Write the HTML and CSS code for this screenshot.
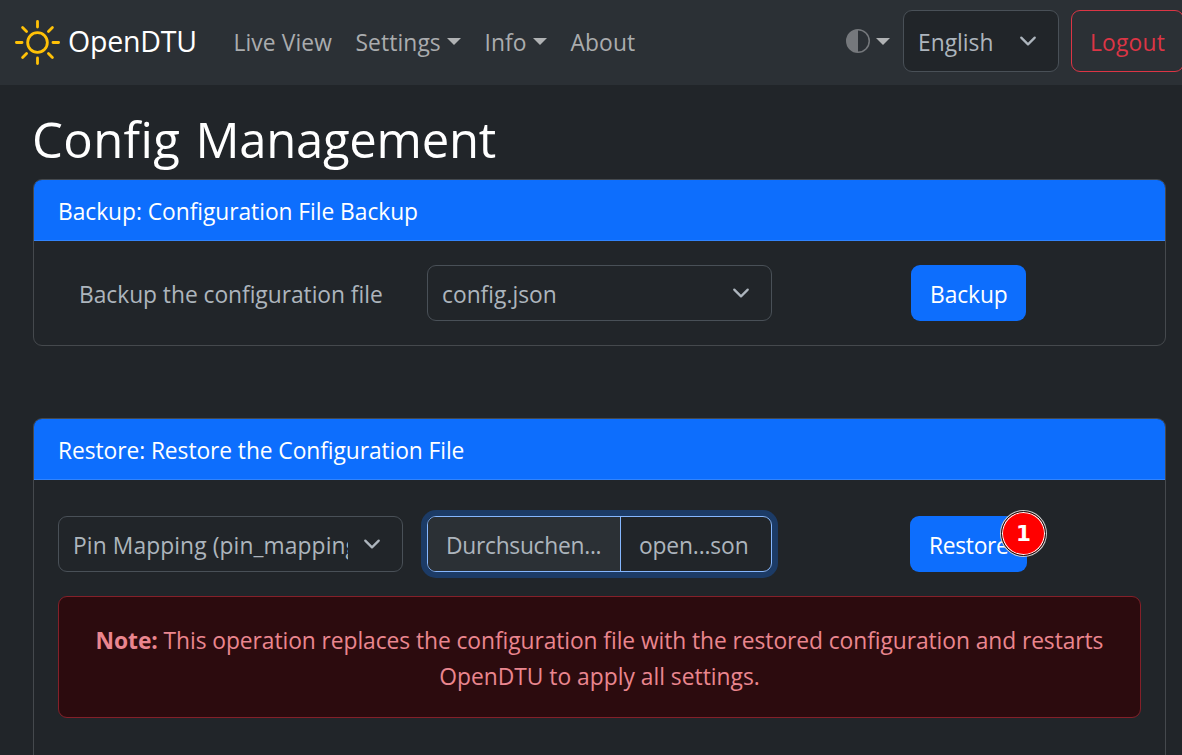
FILE: index.html
```
<!DOCTYPE html>
<html lang="en">
<head>
<meta charset="utf-8">
<title>OpenDTU</title>
<link rel="stylesheet" href="styles.css">
</head>
<body>
<nav class="navbar">
  <a class="brand">
    <svg class="sun" viewBox="0 0 16 16" fill="none" stroke="currentColor" stroke-linecap="round"><circle cx="8" cy="8" r="3.5"/><path d="M8 .5v2M8 13.5v2M.5 8h2M13.5 8h2M2.697 2.697l1.414 1.414M11.889 11.889l1.414 1.414M13.303 2.697l-1.414 1.414M4.111 11.889l-1.414 1.414"/></svg>
    <span class="brand-name">OpenDTU</span>
  </a>
  <a class="nav-link live">Live View</a>
  <a class="nav-link settings">Settings<i class="caret"></i></a>
  <a class="nav-link info">Info<i class="caret"></i></a>
  <a class="nav-link about">About</a>
  <div class="tools">
    <a class="theme"><svg viewBox="0 0 16 16" fill="currentColor"><path d="M8 15A7 7 0 1 0 8 1v14zm0 1A8 8 0 1 1 8 0a8 8 0 0 1 0 16z"/></svg><i class="caret"></i></a>
    <div class="select language"><span class="value">English</span><svg class="chevron" viewBox="0 0 16 16"><path d="m2 5 6 6 6-6"/></svg></div>
    <a class="logout">Logout</a>
  </div>
</nav>
<main class="page">
  <h1>Config <span class="title-end">Management</span></h1>
  <section class="card">
    <header class="card-header"><span class="backup-title">Backup: Configuration File Backup</span></header>
    <div class="row backup-row">
      <div class="label"><span>Backup the configuration file</span></div>
      <div class="select"><span class="value">config.json</span><svg class="chevron" viewBox="0 0 16 16"><path d="m2 5 6 6 6-6"/></svg></div>
      <a class="button backup">Backup</a>
    </div>
  </section>
  <section class="card restore-card">
    <header class="card-header"><span class="restore-title">Restore: Restore the Configuration File</span></header>
    <div class="row restore-row">
      <div class="select"><span class="value pin">Pin Mapping (pin_mapping</span><svg class="chevron" viewBox="0 0 16 16"><path d="m2 5 6 6 6-6"/></svg></div>
      <div class="file"><span class="browse">Durchsuchen...</span><span class="filename">open...son</span></div>
      <a class="button restore">Restore<span class="marker">1</span></a>
    </div>
    <div class="alert">
      <div class="note-one"><b>Note:</b> This operation replaces the configuration file with the restored configuration and restarts</div>
      <div class="note-two">OpenDTU to apply all settings.</div>
    </div>
  </section>
</main>
</body>
</html>
```
FILE: styles.css
```
* { box-sizing: border-box; }
body {
  margin: 0;
  height: 755px;
  overflow: hidden;
  background: #212529;
  color: #adb5bd;
  font: 22.8px/36px "Open Sans", "Noto Sans", sans-serif;
  white-space: nowrap;
}
.navbar {
  display: flex;
  align-items: center;
  height: 85px;
  padding-left: 15px;
  background: #2b3035;
  color: #aaacae;
}
.brand { display: flex; align-items: center; width: 218.5px; height: 85px; color: #fff; font-size: 28.5px; }
.brand-name { padding-bottom: 3px; letter-spacing: -.2px; }
.sun { width: 45px; height: 45px; margin-right: 8px; color: #ffc107; }
.nav-link { display: flex; align-items: center; letter-spacing: .1px; }
.live { width: 122px; }
.settings { width: 129px; }
.info { width: 86px; }
.caret { border: 7px solid transparent; border-top-color: #b0b2b4; border-bottom: 0; margin: 0 0 2px 6px; }
.tools { display: flex; align-items: center; margin-left: auto; margin-right: -2px; padding-bottom: 3px; flex: none; }
.theme { display: flex; align-items: center; width: 57px; color: #75787c; }
.theme svg { width: 24px; height: 24px; }
.theme .caret { margin-bottom: 0; }
.select {
  display: flex;
  align-items: center;
  justify-content: space-between;
  width: 345px;
  height: 56px;
  padding: 0 21px 0 14px;
  border: 1px solid #495057;
  border-radius: 9px;
  background: #212529;
  color: #adb5bd;
}
.value { padding-top: 3px; overflow: hidden; }
.pin { width: 275px; letter-spacing: .1px; }
.chevron { width: 18px; height: 18px; flex: none; fill: none; stroke: #adb5bd; stroke-width: 2; stroke-linecap: round; stroke-linejoin: round; }
.language { width: 156px; height: 62px; margin-right: 12px; }
.logout { width: 113px; height: 62px; padding: 14px 0 0 18px; border: 1px solid #dc3545; border-radius: 9px; color: #dc3545; letter-spacing: .2px; }
.page { padding: 22px 16px 0 33px; }
h1 { margin: 0 0 0 -1px; height: 72px; font-size: 49px; line-height: 65px; font-weight: 400; color: #fff; letter-spacing: .4px; }
.title-end { margin-left: 2px; letter-spacing: -.25px; }
.card { height: 167px; border: 1px solid #45494d; border-radius: 9px; overflow: hidden; }
.restore-card { margin-top: 72px; height: 337px; border-bottom: 0; border-radius: 9px 9px 0 0; }
.card-header { height: 61px; padding: 14px 24px 0; background: #0d6efd; border-bottom: 1px solid #3184fd; color: #fff; }
.backup-title { letter-spacing: -.05px; }
.restore-title { letter-spacing: -.08px; }
.row { display: flex; align-items: center; }
.backup-row { padding: 24px 24px 0; }
.label { width: 369px; padding-left: 21px; padding-top: 4px; letter-spacing: -.04px; }
.button { position: relative; height: 56px; border-radius: 9px; background: #0d6efd; color: #fff; padding: 12px 0 0 19px; letter-spacing: -.1px; }
.backup { width: 115px; margin-left: 139px; }
.restore-row { padding: 36px 24px 0; }
.restore { width: 117px; margin-left: 138px; letter-spacing: -.3px; }
.file { display: flex; width: 345px; height: 56px; margin-left: 24px; border: 1px solid #86b7fe; border-radius: 9px; box-shadow: 0 0 0 6px #1c3b66; }
.browse { width: 193px; padding: 11px 0 0 18px; border-right: 1px solid #86b7fe; border-radius: 8px 0 0 8px; background: #2b3035; letter-spacing: -.28px; }
.filename { padding: 11px 0 0 18px; letter-spacing: -.15px; }
.marker {
  position: absolute;
  left: 91px;
  top: -5px;
  width: 45px;
  height: 45px;
  border: 1px solid #111;
  border-radius: 50%;
  background: #f00;
  box-shadow: inset 0 0 0 1px #fff, 0 0 0 1px #ccc;
  font: bold 21.5px/44px "DejaVu Sans", sans-serif;
  letter-spacing: 0;
  text-align: center;
}
.alert { height: 122px; margin: 24px 24px 0; padding: 26px 0 0; border: 1px solid #842029; border-radius: 9px; background: #2c0b0e; color: #ea868f; text-align: center; }
.note-one { letter-spacing: -.07px; }
```
